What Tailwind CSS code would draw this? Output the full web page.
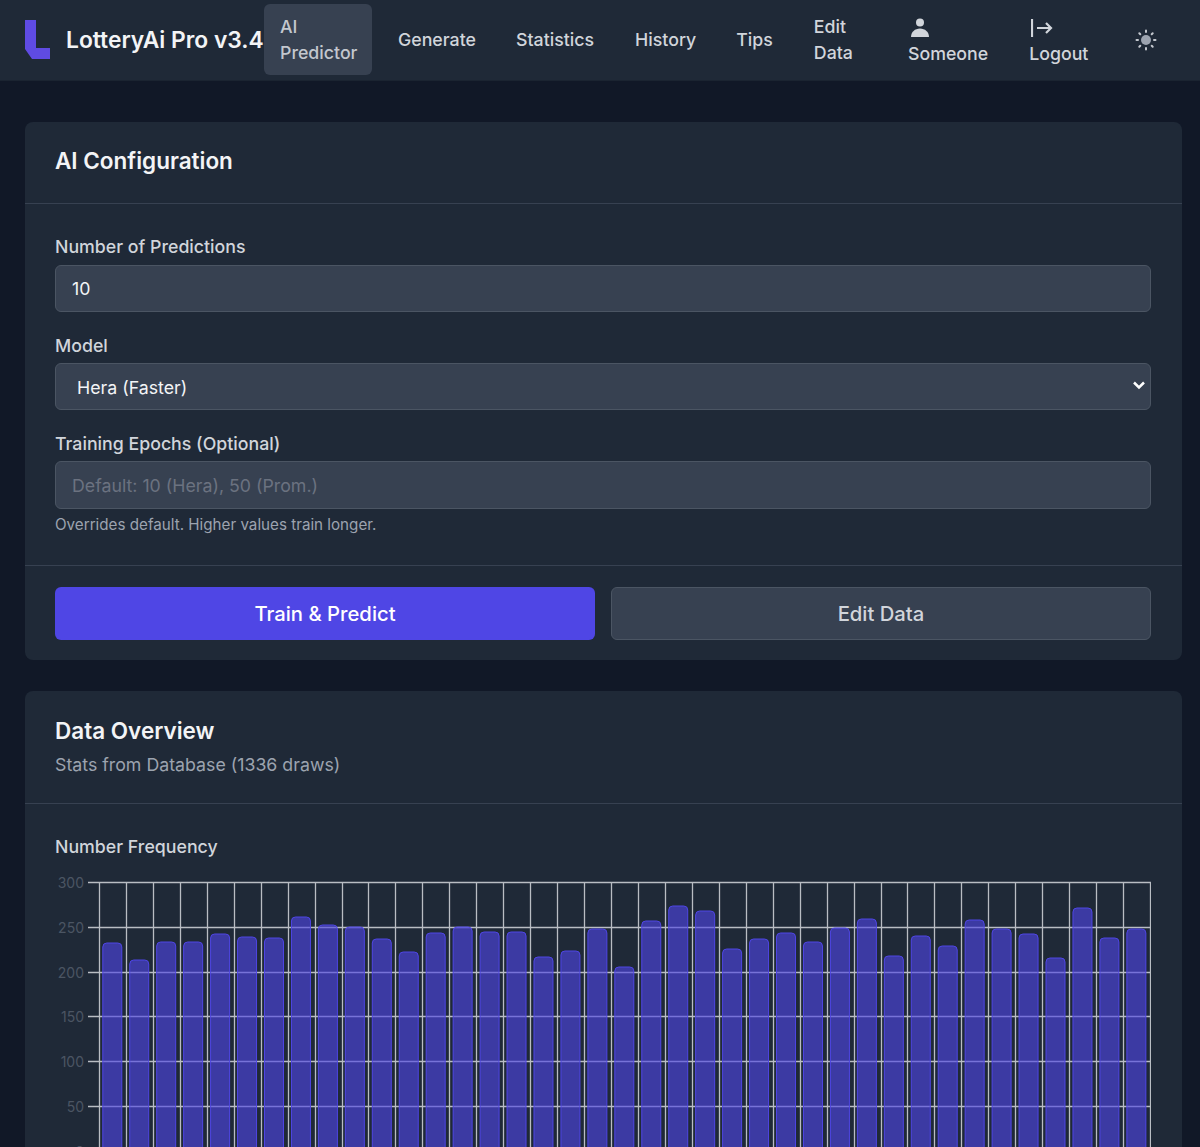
<!DOCTYPE html>
<html lang="en">
<head>
    <meta charset="UTF-8">
    <title>LotteryAi Pro v3.4</title>
    <script src="https://cdn.jsdelivr.net/npm/@tailwindcss/browser@4"></script>
</head>
<body class="bg-[#111827] h-[1147px] overflow-hidden font-['Inter',sans-serif] text-[#e5e7eb]">
    <!-- navbar -->
    <nav class="h-[81px] bg-[#1f2937] border-b border-[#1b2431] flex items-center pl-[25px]">
        <svg class="w-[26px] h-[40px] shrink-0" viewBox="0 0 26 40">
            <path d="M0 0H11V28H25V39H7L0 29Z" fill="#5f4be3"/>
        </svg>
        <span class="ml-[15px] w-[198px] shrink-0 text-[22.8px] font-semibold text-[#f3f4f6] whitespace-nowrap">LotteryAi Pro v3.4</span>
        <div class="flex items-center font-medium text-[17.75px] leading-[26px] text-[#d1d5db]">
            <a class="w-[108px] h-[71px] px-4 py-[10px] -translate-y-px rounded-md bg-[#374151] text-[#c3c7ce]">AI<br>Predictor</a>
            <a class="ml-[26px]">Generate</a>
            <a class="ml-[40px]">Statistics</a>
            <a class="ml-[41px]">History</a>
            <a class="ml-[40px]">Tips</a>
            <a class="ml-[41px]">Edit<br>Data</a>
            <a class="ml-[55px] flex flex-col items-start pt-[5px]">
                <svg class="w-[20px] h-[20px] ml-[2px]" viewBox="0 0 20 20" fill="#d1d5db">
                    <circle cx="10" cy="4.500" r="4"/>
                    <path d="M1 19C1 14 5 10.500 10 10.500S19 14 19 19Z"/>
                </svg>
                <span class="mt-[3px]">Someone</span>
            </a>
            <a class="ml-[41px] flex flex-col items-start pt-[5px]">
                <svg class="w-[22px] h-[20px] ml-[2px]" viewBox="0 0 22 20" fill="none" stroke="#d1d5db" stroke-width="2.200">
                    <path d="M1 1V19"/>
                    <path d="M6 10H20M15 5L20 10L15 15"/>
                </svg>
                <span class="mt-[3px]">Logout</span>
            </a>
            <svg class="w-[22px] h-[22px] ml-[47px]" viewBox="0 0 22 22" fill="#9ca3af" stroke="#c3c7ce" stroke-width="2" stroke-linecap="round">
                <circle cx="11" cy="11" r="5" stroke="none"/>
                <path d="M11 1.500V3M11 19V20.500M1.500 11H3M19 11H20.500M4.300 4.300L5.300 5.300M16.700 16.700L17.700 17.700M4.300 17.700L5.300 16.700M16.700 5.300L17.700 4.300"/>
            </svg>
        </div>
    </nav>

    <main class="pl-[25px] pr-[18px] pt-[41px]">
        <!-- AI config card -->
        <section class="bg-[#1f2937] rounded-lg">
            <div class="h-[82px] pl-[30px] pr-[31px] pb-[3px] flex items-center border-b border-[#374151]">
                <h2 class="text-[22.5px] font-semibold text-[#f3f4f6]">AI Configuration</h2>
            </div>
            <div class="pl-[30px] pr-[31px] pt-[30px] h-[362px] border-b border-[#374151]">
                <label class="block text-[17.75px] leading-[26px] font-medium text-[#d1d5db]">Number of Predictions</label>
                <input class="block w-full h-[47px] mt-[5px] px-4 bg-[#374151] border border-[#4b5563] rounded-md text-[17.75px] text-[#f3f4f6]" value="10">
                <label class="block mt-[21px] text-[17.75px] leading-[26px] font-medium text-[#d1d5db]">Model</label>
                <div class="relative mt-[4px]">
                    <select class="block w-full h-[47px] pl-[21px] pr-8 pt-[3px] appearance-none bg-[#374151] border border-[#4b5563] rounded-md text-[17.75px] text-[#f3f4f6]">
                        <option>Hera (Faster)</option>
                    </select>
                    <svg class="absolute right-[6px] top-[18px] w-[12px] h-[9px]" viewBox="0 0 12 9" fill="none" stroke="#ffffff" stroke-width="2.500">
                        <path d="M1 1.500L6 6.500L11 1.500"/>
                    </svg>
                </div>
                <label class="block mt-[21px] text-[17.75px] leading-[26px] font-medium text-[#d1d5db]">Training Epochs (Optional)</label>
                <input class="block w-full h-[48px] mt-[4px] px-4 bg-[#374151] border border-[#4b5563] rounded-md text-[17.75px] placeholder:text-[#6b7280]" placeholder="Default: 10 (Hera), 50 (Prom.)">
                <p class="mt-[6px] text-[15.2px] leading-[20px] text-[#9ca3af]">Overrides default. Higher values train longer.</p>
            </div>
            <div class="pl-[30px] pr-[31px] pt-[21px] pb-[20px] grid grid-cols-2 gap-4">
                <button class="h-[53px] pt-[2px] rounded-md bg-[#4f46e5] text-white text-[20.25px] font-medium">Train &amp; Predict</button>
                <button class="h-[53px] pt-[2px] rounded-md bg-[#374151] border border-[#4b5563] text-[#d1d5db] text-[20.25px] font-medium">Edit Data</button>
            </div>
        </section>

        <!-- data overview card -->
        <section class="mt-[31px] bg-[#1f2937] rounded-lg">
            <div class="h-[113px] px-[30px] pt-[24px] border-b border-[#374151]">
                <h2 class="text-[22.5px] leading-[32px] font-semibold text-[#f3f4f6]">Data Overview</h2>
                <p class="mt-[5px] text-[17.75px] leading-[26px] text-[#9ca3af]">Stats from Database (1336 draws)</p>
            </div>
            <div class="pl-[30px] pr-[31px] pt-[30px] pb-[30px]">
                <h3 class="text-[17.75px] leading-[26px] font-medium text-[#d1d5db]">Number Frequency</h3>
                <svg id="chart" class="block mt-[12px] w-[1096px] h-[290px]" viewBox="0 0 1096 290" font-family="Inter, sans-serif" font-size="14"></svg>
            </div>
        </section>
    </main>

    <script>
        // bar tops in page pixels, read off the frequency chart
        const tops = [943,960,942,942,934,937,938,917,925,927,939,952,933,927,932,932,957,951,929,967,921,906,911,949,939,933,942,928,919,956,936,946,920,929,934,958,908,938,929];
        const chartTop = 872, zeroY = 1150.5 - chartTop, stepY = 44.7, plotX = 44, stepX = 1051 / 39;
        let svg = "";

        for (let i = 0; i <= 6; i++) {
            const y = Math.round(zeroY - i * stepY) + 0.5;
            svg += `<path d="M33 ${y}H1096" stroke="#b9bdc3" stroke-width="1.300"/>`;
            svg += `<text x="29" y="${y + 5}" text-anchor="end" fill="#4b5563">${i * 50}</text>`;
        }
        for (let i = 0; i <= 39; i++) {
            const x = Math.round(plotX + i * stepX) + 0.5;
            svg += `<path d="M${x} ${zeroY - 6 * stepY}V${zeroY + 8}" stroke="#b9bdc3" stroke-width="1.300"/>`;
        }
        tops.forEach((top, i) => {
            const x = plotX + i * stepX + 3.800;
            const y = top - chartTop;
            svg += `<rect x="${x}" y="${y}" width="19" height="${zeroY - y + 6}" rx="4" fill="#4f46e5" fill-opacity="0.62" stroke="#4f46e5"/>`;
        });
        document.getElementById("chart").innerHTML = svg;
    </script>
</body>
</html>
